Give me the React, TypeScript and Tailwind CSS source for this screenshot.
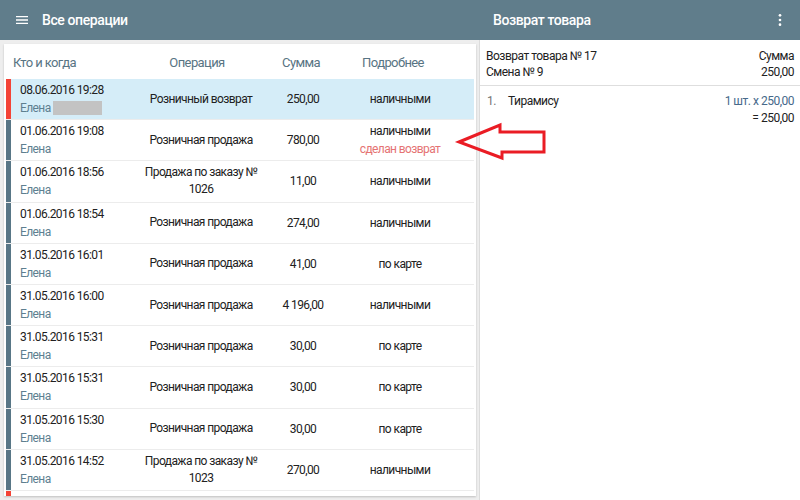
import React from "react";

type Op = {
  date: string;
  name: string;
  op: string[];
  sum: string;
  pay: string;
  returned?: boolean;
  kind: "return" | "sale";
  selected?: boolean;
  hidden?: boolean;
  stub?: boolean;
};

const ops: Op[] = [
  { date: "08.06.2016 19:28", name: "Елена", op: ["Розничный возврат"], sum: "250,00", pay: "наличными", kind: "return", selected: true, hidden: true },
  { date: "01.06.2016 19:08", name: "Елена", op: ["Розничная продажа"], sum: "780,00", pay: "наличными", kind: "sale", returned: true },
  { date: "01.06.2016 18:56", name: "Елена", op: ["Продажа по заказу №", "1026"], sum: "11,00", pay: "наличными", kind: "sale" },
  { date: "01.06.2016 18:54", name: "Елена", op: ["Розничная продажа"], sum: "274,00", pay: "наличными", kind: "sale" },
  { date: "31.05.2016 16:01", name: "Елена", op: ["Розничная продажа"], sum: "41,00", pay: "по карте", kind: "sale" },
  { date: "31.05.2016 16:00", name: "Елена", op: ["Розничная продажа"], sum: "4 196,00", pay: "наличными", kind: "sale" },
  { date: "31.05.2016 15:31", name: "Елена", op: ["Розничная продажа"], sum: "30,00", pay: "по карте", kind: "sale" },
  { date: "31.05.2016 15:31", name: "Елена", op: ["Розничная продажа"], sum: "30,00", pay: "по карте", kind: "sale" },
  { date: "31.05.2016 15:30", name: "Елена", op: ["Розничная продажа"], sum: "30,00", pay: "по карте", kind: "sale" },
  { date: "31.05.2016 14:52", name: "Елена", op: ["Продажа по заказу №", "1023"], sum: "270,00", pay: "наличными", kind: "sale" },
  // next row, scrolled almost out of view
  { date: "", name: "", op: [], sum: "", pay: "", kind: "return", stub: true },
];

function OpRow({ item }: { item: Op }) {
  return (
    <div
      className={`flex h-[41.2px] shrink-0 border-b border-[#ececec] text-[12px] tracking-[-0.6px] ${
        item.selected ? "bg-[#d5edf8]" : "bg-white"
      }`}
    >
      <div
        className={`w-[5px] shrink-0 ${
          item.kind === "return" ? "bg-[#f44336]" : "bg-[#587686]"
        }`}
      />
      {!item.stub && (
        <>
          <div className="w-[129px] shrink-0 pl-[9px] flex flex-col justify-center leading-[18px]">
            <div className="text-[#212121]">{item.date}</div>
            <div className="text-[#5e7f90] flex items-center">
              {item.name}
              {item.hidden && <span className="ml-[2px] w-[49px] h-[14px] bg-[#c3c3c3]" />}
            </div>
          </div>
          <div className="w-[122px] shrink-0 flex flex-col items-center justify-center text-center text-[#212121] leading-[17px] whitespace-nowrap">
            {item.op.map((l) => (
              <div key={l}>{l}</div>
            ))}
          </div>
          <div className="w-[82px] shrink-0 flex items-center justify-center text-[#212121]">
            {item.sum}
          </div>
          <div className="w-[112px] shrink-0 flex flex-col items-center justify-center leading-[18px]">
            <div className="text-[#212121]">{item.pay}</div>
            {item.returned && <div className="text-[#e57373]">сделан возврат</div>}
          </div>
        </>
      )}
    </div>
  );
}

export default function App() {
  return (
    <div className="w-[800px] h-[500px] flex flex-col overflow-hidden font-['Roboto',sans-serif] relative">
      {/* Toolbar */}
      <header className="h-10 shrink-0 flex bg-[#607d8b] text-white">
        <div className="w-[480px] flex items-center">
          <svg className="ml-[14px]" width="16" height="16" viewBox="0 0 24 24" fill="white">
            <path d="M3 6h18v2H3zM3 11h18v2H3zM3 16h18v2H3z" />
          </svg>
          <span className="ml-[12px] text-[14px] font-medium tracking-[-0.4px]">Все операции</span>
        </div>
        <div className="flex-1 flex items-center">
          <span className="ml-[13px] text-[14px] font-medium tracking-[-0.4px]">Возврат товара</span>
          <svg className="ml-auto mr-[12px]" width="16" height="16" viewBox="0 0 24 24" fill="white">
            <circle cx="12" cy="5" r="2" />
            <circle cx="12" cy="12" r="2" />
            <circle cx="12" cy="19" r="2" />
          </svg>
        </div>
      </header>

      <div className="flex-1 flex min-h-0">
        {/* Operations list */}
        <div className="w-[480px] shrink-0 bg-[#eeeeee] p-1 border-r border-[#dcdcdc]">
          <div className="w-[472px] h-full bg-white shadow-[0_1px_2px_rgba(0,0,0,0.2)] px-[2px] flex flex-col overflow-hidden">
            <div className="h-[35px] shrink-0 flex items-end pb-[7px] text-[13px] tracking-[-0.6px] text-[#587483]">
              <div className="w-[134px] pl-[7px]">Кто и когда</div>
              <div className="w-[122px] text-center pr-[8px]">Операция</div>
              <div className="w-[82px] text-center pr-[4px]">Сумма</div>
              <div className="w-[112px] text-center pr-[14px]">Подробнее</div>
            </div>
            {ops.map((o, i) => (
              <OpRow key={i} item={o} />
            ))}
          </div>
        </div>

        {/* Receipt details */}
        <div className="flex-1 bg-white text-[12px] tracking-[-0.5px]">
          <div className="h-[46px] flex justify-between px-[6px] pt-[8px] text-[#212121] leading-[16px] border-b border-[#dedede]">
            <div>
              <div>Возврат товара № 17</div>
              <div>Смена № 9</div>
            </div>
            <div className="text-right">
              <div>Сумма</div>
              <div>250,00</div>
            </div>
          </div>
          <div className="flex px-[6px] pt-[7px] leading-[17px]">
            <div className="w-[22px] pl-[1px] text-[#757575]">1.</div>
            <div className="text-[#212121]">Тирамису</div>
            <div className="ml-auto text-right">
              <div className="text-[#46698a]">1 шт. x 250,00</div>
              <div className="text-[#212121]">= 250,00</div>
            </div>
          </div>
        </div>
      </div>

      {/* Annotation arrow */}
      <svg className="absolute left-0 top-0 pointer-events-none" width="800" height="500">
        <polygon
          points="459,142 500,125 500,132 544,132 544,152 502,152 502,158"
          fill="none"
          stroke="#ea1c24"
          strokeWidth="3"
          strokeLinejoin="miter"
        />
      </svg>
    </div>
  );
}
